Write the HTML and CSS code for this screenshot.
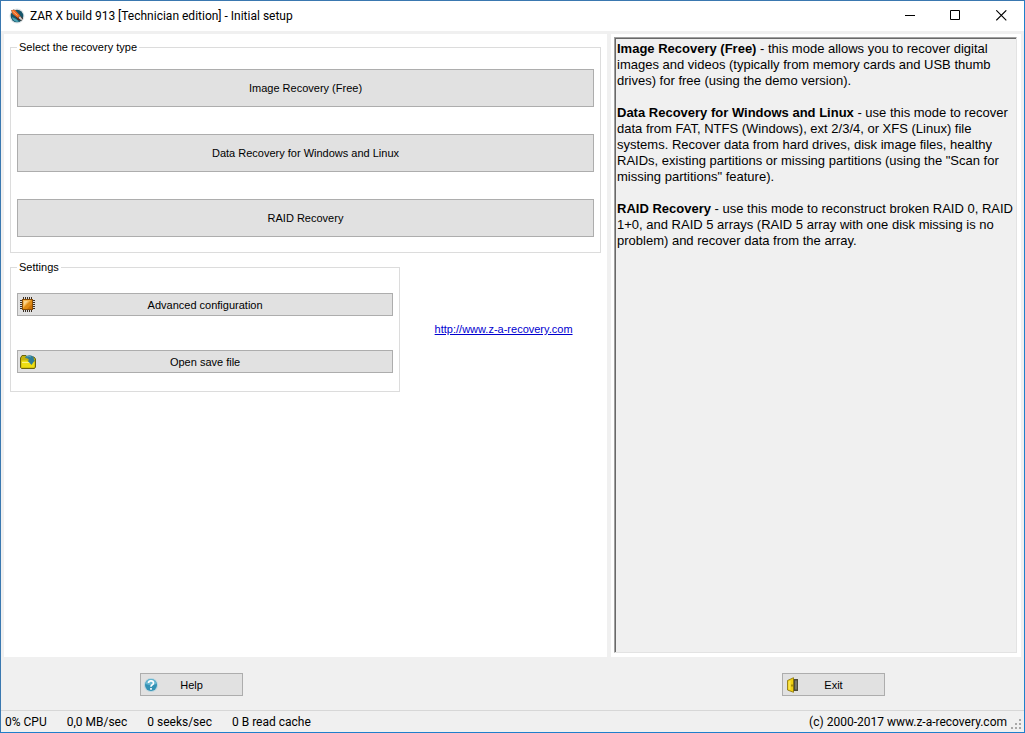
FILE: index.html
```html
<!DOCTYPE html>
<html lang="en">
<head>
    <meta charset="UTF-8">
    <meta name="viewport" content="width=device-width, initial-scale=1.0">
    <title>ZAR X build 913 [Technician edition] - Initial setup</title>
    <link rel="stylesheet" href="styles.css">
</head>
<body>
    <div class="window">
        <!-- Title bar -->
        <header class="titlebar">
            <svg class="app-icon" viewBox="0 0 16 16" width="16" height="16">
                <circle cx="8" cy="8" r="7.5" fill="#dfe3e5"/>
                <circle cx="8" cy="8" r="6.3" fill="#17566b"/>
                <path d="M3 9a5 5 0 0 0 7 4.5L7 11z" fill="#4ba3b5"/>
                <path d="M2 2.500 5 1.500 14 10.500 12.500 12.500 9 12z" fill="#5a2a18"/>
                <path d="M2.500 2 6 2 11 7.500 9 10 3.500 6z" fill="#ea6a25"/>
                <path d="M3.500 3 8.500 7.500" stroke="#ffb27a" stroke-width="1"/>
                <path d="M11 8 13.500 11.500 12 12 9.500 10z" fill="#c8d3d8"/>
            </svg>
            <h1 class="title">ZAR X build 913 [Technician edition] - Initial setup</h1>
            <button class="window-button" type="button" aria-label="Minimize">
                <svg viewBox="0 0 11 11" width="11" height="11"><path d="M1 5.500h10" stroke="#000"/></svg>
            </button>
            <button class="window-button" type="button" aria-label="Maximize">
                <svg viewBox="0 0 11 11" width="11" height="11"><path d="M.5.5h9v9h-9z" fill="none" stroke="#000"/></svg>
            </button>
            <button class="window-button" type="button" aria-label="Close">
                <svg viewBox="0 0 11 11" width="11" height="11"><path d="M.3.3l10 10M10.300.3l-10 10" stroke="#000" stroke-width="1.100"/></svg>
            </button>
        </header>

        <main class="content">
            <div class="panel left-panel">
                <fieldset class="group recovery">
                    <legend>Select the recovery type</legend>
                    <button class="button big-button" type="button">Image Recovery (Free)</button>
                    <button class="button big-button" type="button">Data Recovery for Windows and Linux</button>
                    <button class="button big-button" type="button">RAID Recovery</button>
                </fieldset>

                <div class="lower">
                    <fieldset class="group settings">
                        <legend>Settings</legend>
                        <button class="button icon-button" type="button">
                            <svg viewBox="0 0 16 16" width="16" height="16">
                                <path d="M3.500 0v15M5.500 0v15M7.500 0v15M9.500 0v15M11.500 0v15M0 3.500h15M0 5.500h15M0 7.500h15M0 9.500h15M0 11.500h15" stroke="#3b2f24"/>
                                <rect x="2" y="2" width="11" height="11" fill="#8a4f08"/>
                                <rect x="3" y="3" width="9" height="9" fill="#e08d16"/>
                                <path d="M3 3h8L3 11z" fill="#f5b651"/>
                                <path d="M4 4h4L4 8z" fill="#fcd58c"/>
                                <path d="M12 7v5H7z" fill="#cc7408"/>
                            </svg>
                            <span>Advanced configuration</span>
                        </button>
                        <button class="button icon-button" type="button">
                            <svg viewBox="0 0 16 16" width="16" height="16">
                                <path d="M.5 4 2 1.500h4l1 1.500h7l1.500 2v8l-1 1.500h-13l-1-1z" fill="#c4b20a" stroke="#6b640c"/>
                                <path d="M1.500 6.500h6l1 1.500h6v4.500l-.5 1H2l-.5-.5z" fill="#eede12"/>
                                <path d="M2 8.500h10" stroke="#fbf27a"/>
                                <path d="M5 4Q6 1 10 1.200 14 1.500 14 6h1l-3.500 5L7.500 6.500H9Q9 4 5 4z" fill="#2f7d98"/>
                                <path d="M6.500 3Q9 1.500 11 3" stroke="#5ba4b8" fill="none"/>
                            </svg>
                            <span>Open save file</span>
                        </button>
                    </fieldset>
                    <a class="site-link" href="http://www.z-a-recovery.com">http://www.z-a-recovery.com</a>
                </div>
            </div>

            <div class="panel right-panel">
                <div class="info">
                    <p><b>Image Recovery (Free)</b> - this mode allows you to recover digital<br>images and videos (typically from memory cards and USB thumb<br>drives) for free (using the demo version).</p>
                    <p><b>Data Recovery for Windows and Linux</b> - use this mode to recover<br>data from FAT, NTFS (Windows), ext 2/3/4, or XFS (Linux) file<br>systems. Recover data from hard drives, disk image files, healthy<br>RAIDs, existing partitions or missing partitions (using the "Scan for<br>missing partitions" feature).</p>
                    <p><b>RAID Recovery</b> - use this mode to reconstruct broken RAID 0, RAID<br>1+0, and RAID 5 arrays (RAID 5 array with one disk missing is no<br>problem) and recover data from the array.</p>
                </div>
            </div>
        </main>

        <div class="actions">
            <button class="button icon-button action" type="button">
                <svg viewBox="0 0 16 16" width="16" height="16">
                    <circle cx="8" cy="8" r="7" fill="#b9d5df"/>
                    <circle cx="8" cy="8" r="6" fill="#3492b5"/>
                    <path d="M2.500 7a5.500 5 0 0 1 11 0Q8 9 2.500 7z" fill="#68b8d2"/>
                    <path d="M5.500 6Q5.600 3.800 8 3.800T10.500 6Q10.500 7.200 9 8 8 8.600 8 9.800M8 11v1.700" fill="none" stroke="#fff" stroke-width="1.700"/>
                </svg>
                <span>Help</span>
            </button>
            <button class="button icon-button action" type="button">
                <svg viewBox="0 0 16 16" width="16" height="16">
                    <path d="M6 2h7v12H6z" fill="#4c4a3c"/>
                    <path d="M10 3.500h2v9h-2z" fill="#77756a"/>
                    <path d="M2.500 3.500 8.500.7v14.600l-6-2.300z" fill="#f0cf12" stroke="#857006" stroke-width=".8"/>
                    <path d="M3.500 4.500 5.500 3.500v9.500l-2-.8z" fill="#f9e550"/>
                    <path d="M7 7.500v2" stroke="#5c4e08"/>
                </svg>
                <span>Exit</span>
            </button>
        </div>

        <footer class="statusbar">
            <span>0% CPU</span>
            <span>0,0 MB/sec</span>
            <span>0 seeks/sec</span>
            <span>0 B read cache</span>
            <span class="copyright">(c) 2000-2017 www.z-a-recovery.com</span>
            <svg class="grip" viewBox="0 0 10 10" width="10" height="10">
                <path d="M8 0h2v2H8zM4 4h2v2H4zM8 4h2v2H8zM0 8h2v2H0zM4 8h2v2H4zM8 8h2v2H8z" fill="#a8a8a8"/>
            </svg>
        </footer>
    </div>
</body>
</html>
```
FILE: styles.css
```css
* {
    box-sizing: border-box;
}

body {
    margin: 0;
    font-family: "Liberation Sans", Arial, sans-serif;
    font-size: 11px;
    color: #000;
}

.window {
    display: flex;
    flex-direction: column;
    min-height: 100vh;
    border: 1px solid #1f7fcb;
    border-top-color: #3a78b0;
    border-left-color: #3a78b0;
    background-color: #f0f0f0;
}

/* Title bar */
.titlebar {
    display: flex;
    align-items: center;
    height: 30px;
    padding-left: 8px;
    background-color: #fff;
}

.title {
    flex: 1;
    margin: 0 0 0 5px;
    font-family: Roboto, "Open Sans", sans-serif;
    font-size: 12px;
    font-weight: normal;
}

.window-button {
    display: flex;
    align-items: center;
    justify-content: center;
    width: 46px;
    height: 30px;
    padding: 0 0 2px;
    border: none;
    background: none;
}

/* Main area */
.content {
    display: grid;
    grid-template-columns: 603fr 410fr;
    gap: 4px;
    flex: 1;
    padding: 3px 3px 0;
}

.panel {
    background-color: #fff;
}

.left-panel {
    display: flex;
    flex-direction: column;
    gap: 7px;
    padding: 6px;
}

.group {
    display: flex;
    flex-direction: column;
    min-width: 0;
    margin: 0;
    border: 1px solid #dcdcdc;
}

.group legend {
    padding: 0 2px;
    line-height: 14px;
}

.recovery {
    gap: 27px;
    padding: 15px 6px;
}

.settings {
    flex: 390 1 0;
    gap: 34px;
    padding: 19px 6px 18px;
}

.button {
    border: 1px solid #adadad;
    background-color: #e1e1e1;
    color: #000;
    font-family: inherit;
    font-size: 11px;
}

.button:hover {
    border-color: #0078d7;
    background-color: #e5f1fb;
}

.big-button {
    height: 38px;
}

.icon-button {
    display: grid;
    grid-template-columns: 16px 1fr 16px;
    align-items: center;
    height: 23px;
    padding: 0 2px;
}

.lower {
    display: flex;
    align-items: center;
}

.site-link {
    flex: 202 1 0;
    padding: 6px 0 0 6px;
    text-align: center;
    color: #0000d0;
}

.right-panel {
    display: flex;
    padding: 3px 4px 4px 3px;
}

.info {
    flex: 1;
    padding: 3px 0 0 2px;
    border: 1px solid #e3e3e3;
    border-top-color: #a0a0a0;
    border-left-color: #a0a0a0;
    box-shadow: inset 1px 1px #696969;
    background-color: #f0f0f0;
    font-size: 13px;
    line-height: 16px;
}

.info p {
    margin: 0 0 16px;
}

/* Bottom buttons */
.actions {
    display: flex;
    justify-content: space-between;
    padding: 16px 139px 14px;
}

.action {
    width: 103px;
}

.statusbar {
    display: flex;
    align-items: center;
    gap: 20px;
    height: 22px;
    padding: 0 3px 0 4px;
    border-top: 1px solid #d7d7d7;
    font-family: Roboto, "Open Sans", sans-serif;
    font-size: 12px;
}

.copyright {
    margin-left: auto;
}

.grip {
    align-self: flex-end;
    margin: 0 0 3px -16px;
}
```
